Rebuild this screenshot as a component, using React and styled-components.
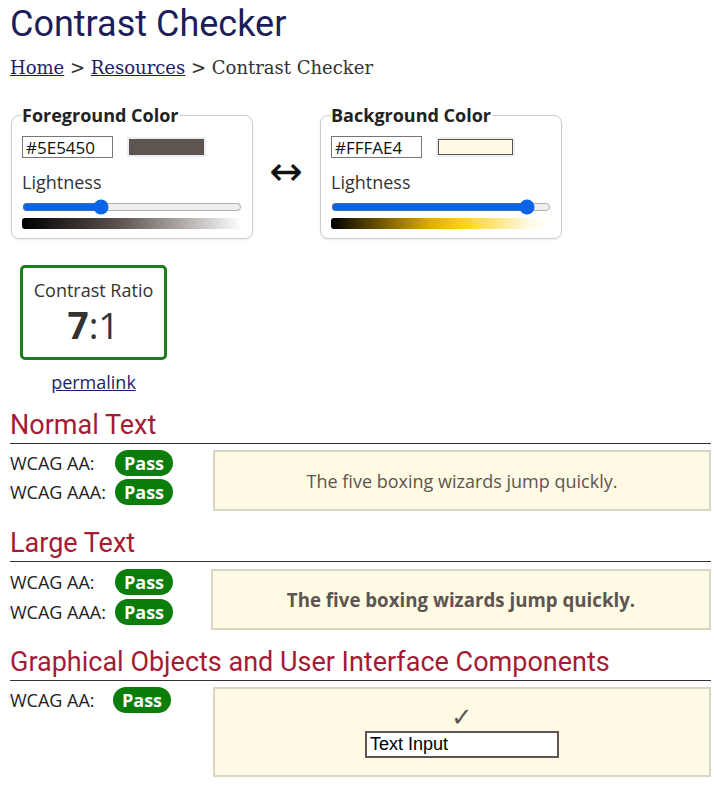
import React from 'react';
import styled, { createGlobalStyle } from 'styled-components';

const GlobalStyle = createGlobalStyle`
  body {
    margin: 0;
    background: #fff;
    font-family: 'Open Sans', 'DejaVu Sans', sans-serif;
    color: #222;
  }
`;

const Page = styled.div`
  padding: 0 3px 10px 10px;
`;

const Title = styled.h1`
  font-family: Roboto, sans-serif;
  font-weight: 400;
  font-size: 36px;
  line-height: 46px;
  margin: 1px 0 0 0;
  color: #1c1d5a;
`;

const Crumbs = styled.nav`
  font-family: 'DejaVu Serif', serif;
  font-size: 18px;
  line-height: 26px;
  margin-top: 8px;
  color: #333;
  a {
    color: #1c1d6e;
  }
`;

const Pickers = styled.div`
  display: flex;
  align-items: center;
  margin-top: 22px;
`;

const Field = styled.fieldset`
  width: 242px;
  box-sizing: border-box;
  margin: 0 0 0 1px;
  padding: 9px 10px 9px 10px;
  border: 1px solid #ccc;
  border-radius: 8px;
  box-shadow: 0 1px 2px rgba(0,0,0,0.08);
`;

const Legend = styled.legend`
  font-weight: 700;
  font-size: 18px;
  line-height: 24px;
  padding: 0 2px 0 0;
  color: #222;
`;

const InputRow = styled.div`
  display: flex;
  align-items: center;
  gap: 14px;
`;

const HexInput = styled.input`
  width: 91px;
  height: 22px;
  box-sizing: border-box;
  border: 1px solid #767676;
  font-family: 'Open Sans', sans-serif;
  font-size: 17px;
  padding: 0 3px;
  color: #111;
`;

const Swatch = styled.div`
  width: 79px;
  height: 20px;
  box-sizing: border-box;
  border: 2px solid #eee;
  background: #fff;
  span {
    display: block;
    height: 100%;
    border: 1px solid #555;
    box-sizing: border-box;
    background: ${p => p.$color};
  }
`;

const Label = styled.div`
  font-size: 18px;
  line-height: 24px;
  margin-top: 12px;
  color: #333;
`;

const Range = styled.input`
  display: block;
  width: 220px;
  height: 16px;
  margin: 5px 0 0 0;
  accent-color: #0b63e5;
`;

const Gradient = styled.div`
  width: 220px;
  height: 11px;
  margin-top: 3px;
  border-radius: 3px;
  background: ${p => p.$bg};
`;

const Swap = styled.div`
  width: 66px;
  text-align: center;
  font-size: 40px;
  line-height: 40px;
  color: #111;
  font-family: 'DejaVu Sans', sans-serif;
`;

const RatioBox = styled.div`
  width: 147px;
  height: 95px;
  box-sizing: border-box;
  margin: 26px 0 0 10px;
  border: 3px solid #1e7b1e;
  border-radius: 5px;
  text-align: center;
  padding-top: 9px;
`;

const RatioLabel = styled.div`
  font-size: 18px;
  line-height: 26px;
  color: #333;
`;

const RatioValue = styled.div`
  font-size: 37px;
  line-height: 44px;
  color: #333;
  b {
    font-weight: 700;
  }
`;

const Permalink = styled.a`
  display: block;
  width: 147px;
  margin: 10px 0 0 10px;
  text-align: center;
  font-size: 18px;
  line-height: 24px;
  color: #1c1d6e;
`;

const Section = styled.section`
  margin-top: ${p => p.$top}px;
`;

const Heading = styled.h2`
  font-family: Roboto, sans-serif;
  font-weight: 400;
  font-size: 27px;
  line-height: 30px;
  margin: 0;
  padding-bottom: 3px;
  color: #a51b34;
  border-bottom: 1px solid #3a2d33;
`;

const Results = styled.div`
  display: flex;
  align-items: flex-start;
  margin-top: ${p => p.$gap}px;
`;

const Checks = styled.div`
  width: ${p => p.$w}px;
  flex-shrink: 0;
  display: flex;
  flex-direction: column;
  gap: ${p => p.$gap}px;
`;

const CheckRow = styled.div`
  display: flex;
  align-items: center;
  height: 26px;
  font-size: 18px;
  color: #222;
`;

const CheckName = styled.span`
  width: ${p => p.$w}px;
`;

const Pass = styled.span`
  display: inline-block;
  width: 58px;
  height: 26px;
  line-height: 26px;
  border-radius: 13px;
  background: #0a7d0a;
  color: #fff;
  font-weight: 700;
  font-size: 18px;
  text-align: center;
`;

const Sample = styled.div`
  flex: 1;
  height: ${p => p.$h}px;
  box-sizing: border-box;
  background: #fffae4;
  border: 2px solid #d9d6c6;
  display: flex;
  flex-direction: column;
  align-items: center;
  justify-content: center;
  color: #5e5450;
  font-size: ${p => (p.$large ? 18.7 : 18)}px;
  font-weight: ${p => (p.$large ? 700 : 400)};
`;

const Check = styled.div`
  font-family: 'DejaVu Sans', sans-serif;
  font-size: 26px;
  line-height: 22px;
  color: #5e5450;
`;

const TextBox = styled.div`
  width: 194px;
  height: 27px;
  box-sizing: border-box;
  margin-top: 3px;
  border: 2px solid #5e5450;
  background: #fff;
  font-family: 'Liberation Sans', Arial, sans-serif;
  font-size: 18px;
  line-height: 23px;
  padding-left: 3px;
  color: #000;
`;

const ColorField = ({ legend, hex, value, gradient }) => (
  <Field>
    <Legend>{legend}</Legend>
    <InputRow>
      <HexInput defaultValue={hex} />
      <Swatch $color={hex}><span /></Swatch>
    </InputRow>
    <Label>Lightness</Label>
    <Range type="range" min="0" max="100" defaultValue={value} />
    <Gradient $bg={gradient} />
  </Field>
);

const CheckList = ({ items, width, nameWidth, gap = 3 }) => (
  <Checks $w={width} $gap={gap}>
    {items.map(name => (
      <CheckRow key={name}>
        <CheckName $w={nameWidth}>{name}</CheckName>
        <Pass>Pass</Pass>
      </CheckRow>
    ))}
  </Checks>
);

export default function App() {
  return (
    <Page>
      <GlobalStyle />
      <Title>Contrast Checker</Title>
      <Crumbs>
        <a href="#">Home</a> &gt; <a href="#">Resources</a> &gt; Contrast Checker
      </Crumbs>
      <Pickers>
        <ColorField
          legend="Foreground Color"
          hex="#5E5450"
          value={35}
          gradient="linear-gradient(to right, #000, #5e5450 45%, #fff)"
        />
        <Swap>↔</Swap>
        <ColorField
          legend="Background Color"
          hex="#FFFAE4"
          value={92}
          gradient="linear-gradient(to right, #000, #e0ad00 45%, #ffd21a 60%, #fffae4 90%, #fff)"
        />
      </Pickers>
      <RatioBox>
        <RatioLabel>Contrast Ratio</RatioLabel>
        <RatioValue><b>7</b>:1</RatioValue>
      </RatioBox>
      <Permalink href="#">permalink</Permalink>

      <Section $top={16}>
        <Heading>Normal Text</Heading>
        <Results $gap={6}>
          <CheckList items={['WCAG AA:', 'WCAG AAA:']} width={203} nameWidth={105} />
          <Sample $h={61}>The five boxing wizards jump quickly.</Sample>
        </Results>
      </Section>

      <Section $top={17}>
        <Heading>Large Text</Heading>
        <Results $gap={7}>
          <CheckList items={['WCAG AA:', 'WCAG AAA:']} width={201} nameWidth={105} gap={4} />
          <Sample $h={61} $large>The five boxing wizards jump quickly.</Sample>
        </Results>
      </Section>

      <Section $top={17}>
        <Heading>Graphical Objects and User Interface Components</Heading>
        <Results $gap={6}>
          <CheckList items={['WCAG AA:']} width={203} nameWidth={103} />
          <Sample $h={90}>
            <Check>✓</Check>
            <TextBox>Text Input</TextBox>
          </Sample>
        </Results>
      </Section>
    </Page>
  );
}
